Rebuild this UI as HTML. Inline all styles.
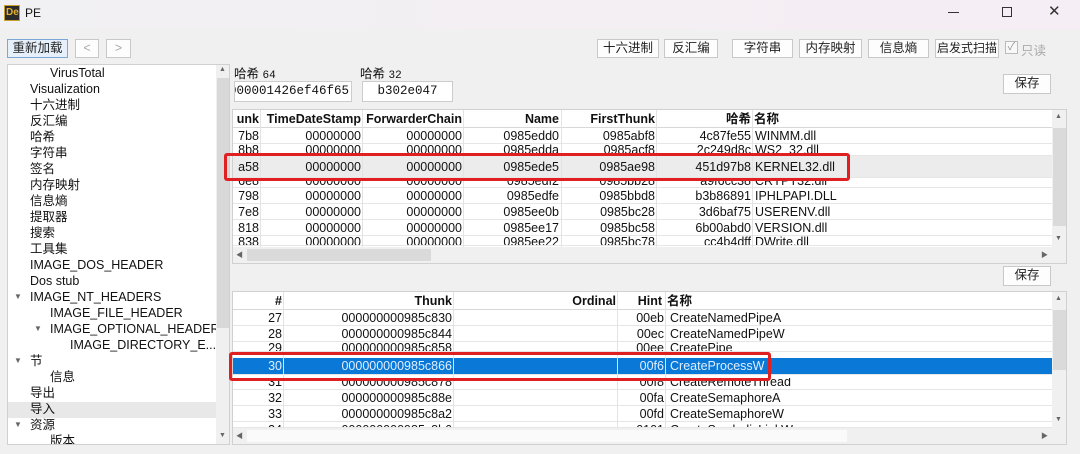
<!DOCTYPE html>
<html><head><meta charset="utf-8"><style>
*{box-sizing:border-box;margin:0;padding:0}
body{width:1080px;height:454px;overflow:hidden;background:#f0f0f0;font-family:"Liberation Sans","Noto Sans CJK SC",sans-serif;font-size:12.5px;color:#111;position:relative}
.a{position:absolute}
.btn{position:absolute;background:#fdfdfd;border:1px solid #c8c8c8;text-align:center;line-height:17px;font-size:12.5px;color:#222;white-space:nowrap;overflow:hidden}
.tree div{position:absolute;height:16px;line-height:16px;white-space:nowrap}
.tbl{position:absolute;background:#fff;border:1px solid #d0d0d0;overflow:hidden}
.row{position:absolute;left:0;height:16px;line-height:16px;border-bottom:1px solid #e6e6e6;white-space:nowrap}
.row span,.hd span{position:absolute;top:0}
.hd{position:absolute;left:0;top:0;height:18px;line-height:18px;background:#fff;border-bottom:1px solid #d8d8d8;font-weight:bold;white-space:nowrap}
.r{text-align:right}
.vl{position:absolute;top:0;width:1px;background:#e3e3e3}
.sb{position:absolute;background:#f0f0f0}
.red{position:absolute;border:3px solid #e02020;border-radius:3px}
.mono{font-family:"Liberation Mono",monospace}
</style></head><body>
<div class="a" style="left:0;top:0;width:1080px;height:30px;background:linear-gradient(90deg,#f1f0f2,#f5eef4)"></div>
<div class="a" style="left:4px;top:5px;width:16px;height:16px;background:#2b2b2b;border:1px solid #c8a030"><div class="a" style="left:1px;top:1px;font-size:10px;font-weight:bold;color:#e8b030;line-height:12px">De</div></div>
<div class="a" style="left:25px;top:6px;font-size:12px">PE</div>
<div class="a" style="left:948px;top:12px;width:11px;height:1px;background:#333"></div>
<div class="a" style="left:1002px;top:7px;width:10px;height:10px;border:1px solid #333"></div>
<div class="a" style="left:1048px;top:2px;font-size:15px;color:#333">✕</div>

<div class="btn" style="left:7px;top:39px;width:61px;height:19px;border-color:#7aa7d6;background:#e6f0fb">重新加载</div>
<div class="btn" style="left:75px;top:39px;width:24px;height:19px;color:#aaa">&lt;</div>
<div class="btn" style="left:106px;top:39px;width:25px;height:19px;color:#aaa">&gt;</div>

<div class="btn" style="left:597px;top:39px;width:62px;height:19px">十六进制</div>
<div class="btn" style="left:664px;top:39px;width:54px;height:19px">反汇编</div>
<div class="btn" style="left:732px;top:39px;width:61px;height:19px">字符串</div>
<div class="btn" style="left:799px;top:39px;width:63px;height:19px">内存映射</div>
<div class="btn" style="left:868px;top:39px;width:61px;height:19px">信息熵</div>
<div class="btn" style="left:935px;top:39px;width:64px;height:19px;font-size:12px">启发式扫描</div>
<div class="a" style="left:1005px;top:41px;width:13px;height:13px;border:1px solid #bbb;background:#f8f8f8;color:#999;font-size:11px;line-height:11px;text-align:center">✓</div>
<div class="a" style="left:1021px;top:40px;color:#aaa">只读</div>

<div class="btn" style="left:1003px;top:74px;width:48px;height:20px">保存</div>
<div class="btn" style="left:1003px;top:266px;width:48px;height:20px">保存</div>

<!-- tree -->
<div class="a" style="left:7px;top:64px;width:223px;height:381px;background:#fff;border:1px solid #d0d0d0;overflow:hidden">
<div class="a" style="left:0;top:337px;width:209px;height:16px;background:#e8e8e8"></div>
<div class="tree">
<div style="left:42px;top:0">VirusTotal</div>
<div style="left:22px;top:16px">Visualization</div>
<div style="left:22px;top:32px">十六进制</div>
<div style="left:22px;top:48px">反汇编</div>
<div style="left:22px;top:64px">哈希</div>
<div style="left:22px;top:80px">字符串</div>
<div style="left:22px;top:96px">签名</div>
<div style="left:22px;top:112px">内存映射</div>
<div style="left:22px;top:128px">信息熵</div>
<div style="left:22px;top:144px">提取器</div>
<div style="left:22px;top:160px">搜索</div>
<div style="left:22px;top:176px">工具集</div>
<div style="left:22px;top:192px">IMAGE_DOS_HEADER</div>
<div style="left:22px;top:208px">Dos stub</div>
<div style="left:6px;top:224px;font-size:8px;color:#666">▼</div>
<div style="left:22px;top:224px">IMAGE_NT_HEADERS</div>
<div style="left:42px;top:240px">IMAGE_FILE_HEADER</div>
<div style="left:26px;top:256px;font-size:8px;color:#666">▼</div>
<div style="left:42px;top:256px">IMAGE_OPTIONAL_HEADER</div>
<div style="left:62px;top:272px">IMAGE_DIRECTORY_E...</div>
<div style="left:6px;top:288px;font-size:8px;color:#666">▼</div>
<div style="left:22px;top:288px">节</div>
<div style="left:42px;top:304px">信息</div>
<div style="left:22px;top:320px">导出</div>
<div style="left:22px;top:336px">导入</div>
<div style="left:6px;top:352px;font-size:8px;color:#666">▼</div>
<div style="left:22px;top:352px">资源</div>
<div style="left:42px;top:368px">版本</div>
</div>
<div class="sb" style="left:208px;top:0;width:14px;height:380px"></div>
<div class="a" style="left:209px;top:13px;width:12px;height:250px;background:#d8d8d8"></div>
<div class="a" style="left:211px;top:1px;font-size:7px;color:#666">▲</div>
<div class="a" style="left:211px;top:367px;font-size:7px;color:#666">▼</div>
</div>

<!-- hash -->
<div class="a" style="left:234px;top:63px">哈希 <span class="mono" style="font-size:11px">64</span></div>
<div class="a" style="left:360px;top:63px">哈希 <span class="mono" style="font-size:11px">32</span></div>
<div class="a mono" style="left:234px;top:81px;width:118px;height:21px;background:#fff;border:1px solid #ccc;line-height:19px;overflow:hidden;font-size:12.5px;display:flex;justify-content:flex-end;padding-right:2px;white-space:nowrap"><span style="flex-shrink:0">000001426ef46f65</span></div>
<div class="a mono" style="left:362px;top:81px;width:91px;height:21px;background:#fff;border:1px solid #ccc;line-height:19px;text-align:center;font-size:12.5px">b302e047</div>

<!-- top table -->
<div class="tbl" style="left:232px;top:109px;width:835px;height:155px">
<div class="hd" style="width:819px">
<span class="r" style="left:0;width:26px;overflow:hidden;direction:rtl">unk</span>
<span class="r" style="left:28px;width:100px">TimeDateStamp</span>
<span class="r" style="left:130px;width:99px">ForwarderChain</span>
<span class="r" style="left:231px;width:95px">Name</span>
<span class="r" style="left:329px;width:93px">FirstThunk</span>
<span class="r" style="left:424px;width:94px">哈希</span>
<span style="left:521px">名称</span>
</div>
<div class="row" style="top:18px;width:819px"><span class="r" style="left:0;width:26px">7b8</span><span class="r" style="left:28px;width:100px">00000000</span><span class="r" style="left:130px;width:99px">00000000</span><span class="r" style="left:231px;width:95px">0985edd0</span><span class="r" style="left:329px;width:93px">0985abf8</span><span class="r" style="left:424px;width:94px">4c87fe55</span><span style="left:522px">WINMM.dll</span></div>
<div class="row" style="top:34px;width:819px;height:12px;line-height:12px;overflow:hidden"><span class="r" style="left:0;width:26px">8b8</span><span class="r" style="left:28px;width:100px">00000000</span><span class="r" style="left:130px;width:99px">00000000</span><span class="r" style="left:231px;width:95px">0985edda</span><span class="r" style="left:329px;width:93px">0985acf8</span><span class="r" style="left:424px;width:94px">2c249d8c</span><span style="left:522px">WS2_32.dll</span></div>
<div class="row" style="top:46px;width:819px;height:22px;line-height:22px;background:#ececec"><span class="r" style="left:0;width:26px">a58</span><span class="r" style="left:28px;width:100px">00000000</span><span class="r" style="left:130px;width:99px">00000000</span><span class="r" style="left:231px;width:95px">0985ede5</span><span class="r" style="left:329px;width:93px">0985ae98</span><span class="r" style="left:424px;width:94px">451d97b8</span><span style="left:522px">KERNEL32.dll</span></div>
<div class="row" style="top:68px;width:819px;height:10px;line-height:6px;overflow:hidden"><span class="r" style="left:0;width:26px">6e8</span><span class="r" style="left:28px;width:100px">00000000</span><span class="r" style="left:130px;width:99px">00000000</span><span class="r" style="left:231px;width:95px">0985edf2</span><span class="r" style="left:329px;width:93px">0985bb28</span><span class="r" style="left:424px;width:94px">a9f6cc38</span><span style="left:522px">CRYPT32.dll</span></div>
<div class="row" style="top:78px;width:819px"><span class="r" style="left:0;width:26px">798</span><span class="r" style="left:28px;width:100px">00000000</span><span class="r" style="left:130px;width:99px">00000000</span><span class="r" style="left:231px;width:95px">0985edfe</span><span class="r" style="left:329px;width:93px">0985bbd8</span><span class="r" style="left:424px;width:94px">b3b86891</span><span style="left:522px">IPHLPAPI.DLL</span></div>
<div class="row" style="top:94px;width:819px"><span class="r" style="left:0;width:26px">7e8</span><span class="r" style="left:28px;width:100px">00000000</span><span class="r" style="left:130px;width:99px">00000000</span><span class="r" style="left:231px;width:95px">0985ee0b</span><span class="r" style="left:329px;width:93px">0985bc28</span><span class="r" style="left:424px;width:94px">3d6baf75</span><span style="left:522px">USERENV.dll</span></div>
<div class="row" style="top:110px;width:819px"><span class="r" style="left:0;width:26px">818</span><span class="r" style="left:28px;width:100px">00000000</span><span class="r" style="left:130px;width:99px">00000000</span><span class="r" style="left:231px;width:95px">0985ee17</span><span class="r" style="left:329px;width:93px">0985bc58</span><span class="r" style="left:424px;width:94px">6b00abd0</span><span style="left:522px">VERSION.dll</span></div>
<div class="row" style="top:126px;width:819px;height:10px;overflow:hidden;line-height:12px"><span class="r" style="left:0;width:26px">838</span><span class="r" style="left:28px;width:100px">00000000</span><span class="r" style="left:130px;width:99px">00000000</span><span class="r" style="left:231px;width:95px">0985ee22</span><span class="r" style="left:329px;width:93px">0985bc78</span><span class="r" style="left:424px;width:94px">cc4b4dff</span><span style="left:522px">DWrite.dll</span></div>
<div class="vl" style="left:27px;height:137px"></div><div class="vl" style="left:129px;height:137px"></div><div class="vl" style="left:230px;height:137px"></div><div class="vl" style="left:328px;height:137px"></div><div class="vl" style="left:423px;height:137px"></div><div class="vl" style="left:519px;height:137px"></div>
<div class="sb" style="left:819px;top:0;width:15px;height:154px"></div>
<div class="a" style="left:820px;top:18px;width:13px;height:98px;background:#dadada"></div>
<div class="a" style="left:822px;top:3px;font-size:7px;color:#666">▲</div>
<div class="a" style="left:822px;top:125px;font-size:7px;color:#666">▼</div>
<div class="sb" style="left:0;top:137px;width:819px;height:17px"></div>
<div class="a" style="left:14px;top:139px;width:184px;height:12px;background:#dadada"></div>
<div class="a" style="left:3px;top:140px;font-size:7px;color:#666">◀</div>
<div class="a" style="left:808px;top:140px;font-size:7px;color:#666">▶</div>
</div>
<div class="red" style="left:224px;top:153px;width:626px;height:28px"></div>

<!-- bottom table -->
<div class="tbl" style="left:232px;top:291px;width:835px;height:154px">
<div class="hd" style="width:819px">
<span class="r" style="left:0;width:49px">#</span>
<span class="r" style="left:52px;width:167px">Thunk</span>
<span class="r" style="left:221px;width:162px">Ordinal</span>
<span class="r" style="left:385px;width:44px">Hint</span>
<span style="left:434px">名称</span>
</div>
<div class="row" style="top:18px;width:819px"><span class="r" style="left:0;width:49px">27</span><span class="r" style="left:52px;width:167px">000000000985c830</span><span class="r" style="left:385px;width:46px">00eb</span><span style="left:437px">CreateNamedPipeA</span></div>
<div class="row" style="top:34px;width:819px"><span class="r" style="left:0;width:49px">28</span><span class="r" style="left:52px;width:167px">000000000985c844</span><span class="r" style="left:385px;width:46px">00ec</span><span style="left:437px">CreateNamedPipeW</span></div>
<div class="row" style="top:50px;width:819px;height:10px;line-height:13px;overflow:hidden"><span class="r" style="left:0;width:49px">29</span><span class="r" style="left:52px;width:167px">000000000985c858</span><span class="r" style="left:385px;width:46px">00ee</span><span style="left:437px">CreatePipe</span></div>
<div class="row" style="top:66px;width:819px;background:#0a78d7;color:#dfefff;height:17px;line-height:17px"><span class="r" style="left:0;width:49px">30</span><span class="r" style="left:52px;width:167px">000000000985c866</span><span class="r" style="left:385px;width:46px">00f6</span><span style="left:437px">CreateProcessW</span></div>
<div class="row" style="top:86px;width:819px;height:12px;line-height:8px;overflow:hidden"><span class="r" style="left:0;width:49px">31</span><span class="r" style="left:52px;width:167px">000000000985c878</span><span class="r" style="left:385px;width:46px">00f8</span><span style="left:437px">CreateRemoteThread</span></div>
<div class="row" style="top:98px;width:819px"><span class="r" style="left:0;width:49px">32</span><span class="r" style="left:52px;width:167px">000000000985c88e</span><span class="r" style="left:385px;width:46px">00fa</span><span style="left:437px">CreateSemaphoreA</span></div>
<div class="row" style="top:114px;width:819px"><span class="r" style="left:0;width:49px">33</span><span class="r" style="left:52px;width:167px">000000000985c8a2</span><span class="r" style="left:385px;width:46px">00fd</span><span style="left:437px">CreateSemaphoreW</span></div>
<div class="row" style="top:130px;width:819px;height:6px;overflow:hidden;line-height:16px"><span class="r" style="left:0;width:49px">34</span><span class="r" style="left:52px;width:167px">000000000985c8b6</span><span class="r" style="left:385px;width:46px">0101</span><span style="left:437px">CreateSymbolicLinkW</span></div>
<div class="vl" style="left:50px;height:136px"></div><div class="vl" style="left:220px;height:136px"></div><div class="vl" style="left:384px;height:136px"></div><div class="vl" style="left:432px;height:136px"></div>
<div class="sb" style="left:819px;top:0;width:15px;height:153px"></div>
<div class="a" style="left:820px;top:18px;width:13px;height:60px;background:#dadada"></div>
<div class="a" style="left:822px;top:3px;font-size:7px;color:#666">▲</div>
<div class="a" style="left:822px;top:124px;font-size:7px;color:#666">▼</div>
<div class="sb" style="left:0;top:136px;width:819px;height:17px"></div>
<div class="a" style="left:14px;top:138px;width:600px;height:12px;background:#fafafa"></div>
<div class="a" style="left:3px;top:139px;font-size:7px;color:#666">◀</div>
<div class="a" style="left:808px;top:139px;font-size:7px;color:#666">▶</div>
</div>
<div class="red" style="left:229px;top:352px;width:542px;height:29px"></div>
</body></html>
